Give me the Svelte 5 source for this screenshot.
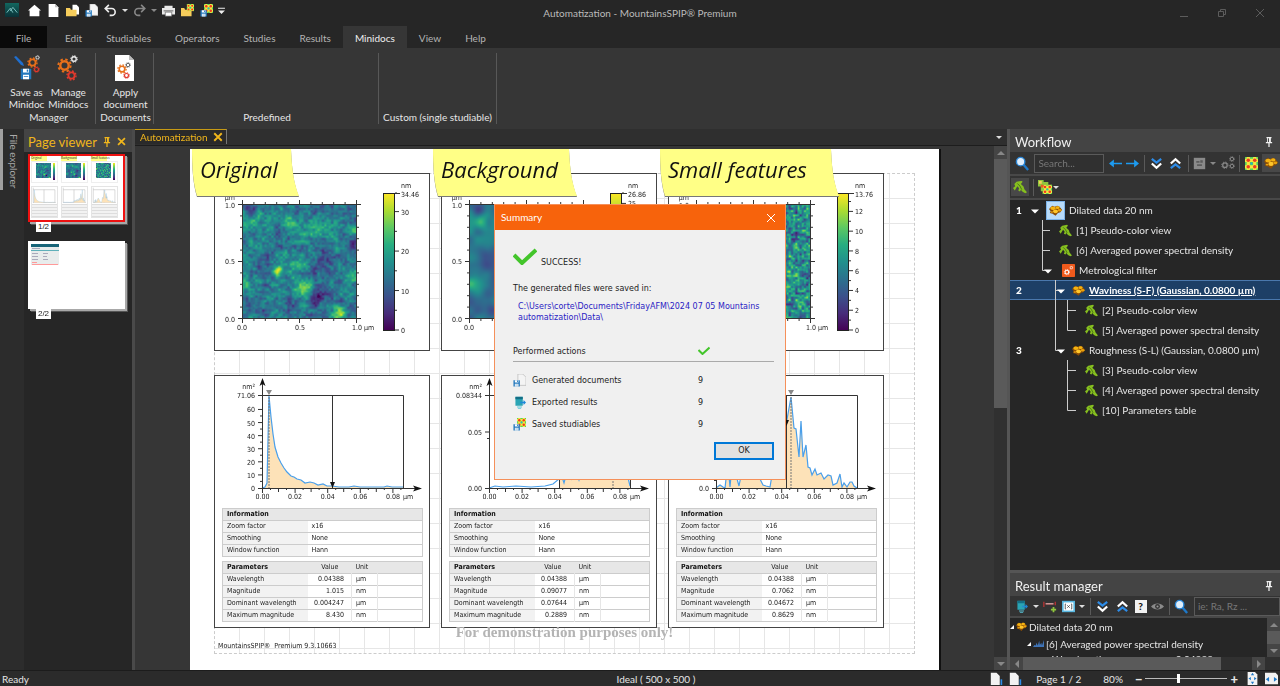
<script>
  /**
   * Surface analysis workspace: ribbon, page viewer, report page,
   * workflow tree and the batch summary dialog.
   */
  const tabs = ['Edit', 'Studiables', 'Operators', 'Studies', 'Results', 'Minidocs', 'View', 'Help']
  let activeTab = $state('Minidocs')
  let summaryOpen = $state(true)
  let zoom = $state(40)

  // Hot spots and pits of the scanned surface: x, y, radius, height (0..1 units)
  const blobs = [
    [0.31, 0.57, 0.04, 0.55], [0.85, 0.95, 0.06, 0.36], [0.82, 0.88, 0.04, 0.15], [0.1, 0.15, 0.06, 0.25],
    [0.4, 0.17, 0.05, 0.25], [0.31, 0.09, 0.07, 0.18], [0.53, 0.72, 0.07, 0.26], [0.98, 0.21, 0.04, 0.35],
    [0.66, 0.27, 0.1, 0.18], [0.45, 0.55, 0.08, 0.14], [0.06, 0.7, 0.1, 0.17], [0.38, 0.42, 0.05, 0.12],
    [0.96, 0.62, 0.05, 0.15], [0.82, 0.3, 0.04, 0.15], [0.72, 0.52, 0.07, -0.2], [0.98, 0.37, 0.06, -0.25],
    [0.64, 0.82, 0.06, -0.2], [0.14, 0.45, 0.08, -0.15], [0.2, 0.93, 0.06, -0.15], [0.08, 0.03, 0.06, -0.15],
    [0.42, 0.88, 0.05, -0.12], [0.28, 0.28, 0.05, -0.12]
  ]

  const columns = [
    {
      title: 'Original', noteWidth: 110, max: 34.46, maxLabel: '34.46', step: 10,
      layers: [[6, 0.1], [13, 0.2], [27, 0.22], [50, 0.22]], relief: 1, base: 0.4,
      yTop: '71.06', yTicks: [10, 20, 30, 40, 50, 60].map((v) => [String(v), 113 - v * 1.309]),
      zero: '0', peak: 55, marker: 118, markerY: 112, fillFrom: 0,
      curve: '48,113 51,112 53,108 55,21 57,42 59,59 61,72 64,82 67,88 70,93 73,97 77,101 80,102 83,104 87,105 91,108 96,107 100,108 104,110 109,109 113,111 118,111 125,112 135,112 140,111 146,112 160,112 170,112 173,111 178,112 189,112',
      values: ['0.04388', '1.015', '0.004247', '8.430'], narrow: false
    },
    {
      title: 'Background', noteWidth: 147, max: 26.86, maxLabel: '26.86', step: 5,
      layers: [[6, 0.15], [13, 0.2]], relief: 1.2, base: 0.38,
      yTop: '0.08344', yTicks: [['0.05', 57]],
      zero: '0.00', peak: 172, marker: 118, markerY: 100, fillFrom: 118,
      curve: '48,113 54,111 62,112 75,111 90,112 104,111 112,109 118,104 120,99 123,108 126,97 130,104 134,92 138,105 143,88 147,100 152,80 157,98 162,50 165,90 168,60 172,21 176,98 179,80 182,104 185,94 189,111',
      values: ['0.04388', '0.09077', '0.07644', '0.2889'], narrow: true
    },
    {
      title: 'Small features', noteWidth: 182, max: 13.76, maxLabel: '13.76', step: 2,
      layers: [[31, 0.4], [53, 0.5]], relief: 0, base: 0.48,
      yTop: '0.5', yTicks: [['0.1', 99]],
      zero: '0.0', peak: 123, marker: 118, markerY: 50, fillFrom: 0,
      curve: '48,113 52,110 55,112 57,113 59,95 61,101 62,112 64,90 68,100 71,111 74,96 80,80 86,90 91,102 95,110 98,111 102,112 104,100 108,75 113,84 118,50 123,22 126,53 128,54 131,82 133,46 135,82 138,70 140,92 142,93 144,100 147,94 149,100 153,98 156,104 160,100 163,101 165,110 169,108 172,99 174,112 176,108 179,112 182,107 184,107 186,111 189,113',
      values: ['0.04388', '0.7062', '0.04672', '0.8629'], narrow: true
    }
  ]

  const info = [['Zoom factor', 'x16'], ['Smoothing', 'None'], ['Window function', 'Hann']]
  const params = [['Wavelength', 'µm'], ['Magnitude', 'nm'], ['Dominant wavelength', 'µm'], ['Maximum magnitude', 'nm']]

  // gutter = width of the guide lines in front of the icon
  const tree = [
    { n: 1, gutter: 18, guide: '', caret: 7, icon: 'gold', text: 'Dilated data 20 nm', boxed: true },
    { gutter: 31, guide: 'M14.5 0V20M14 10.5H22', icon: 'leaf', text: '[1] Pseudo-color view' },
    { gutter: 31, guide: 'M14.5 0V20M14 10.5H22', icon: 'leaf', text: '[6] Averaged power spectral density' },
    { gutter: 34, guide: 'M14.5 0V10.5H20', caret: 20, icon: 'filter', text: 'Metrological filter' },
    { n: 2, gutter: 44, guide: 'M27.5 0V20M27 10.5H33', caret: 33, icon: 'gold', text: 'Waviness (S-F) (Gaussian, 0.0800 µm)', selected: true },
    { gutter: 57, guide: 'M27.5 0V20M39.5 0V20M39 10.5H48', icon: 'leaf', text: '[2] Pseudo-color view' },
    { gutter: 57, guide: 'M27.5 0V20M39.5 0V10.5H48', icon: 'leaf', text: '[5] Averaged power spectral density' },
    { n: 3, gutter: 44, guide: 'M27.5 0V10.5H33', caret: 33, icon: 'gold', text: 'Roughness (S-L) (Gaussian, 0.0800 µm)' },
    { gutter: 57, guide: 'M39.5 0V20M39 10.5H48', icon: 'leaf', text: '[3] Pseudo-color view' },
    { gutter: 57, guide: 'M39.5 0V20M39 10.5H48', icon: 'leaf', text: '[4] Averaged power spectral density' },
    { gutter: 57, guide: 'M39.5 0V10.5H48', icon: 'leaf', text: '[10] Parameters table' }
  ]

  const actions = [['docsave', 'Generated documents', 9], ['export', 'Exported results', 9], ['colorsave', 'Saved studiables', 9]]

  const viridis = [[68, 1, 84], [71, 44, 122], [59, 81, 139], [44, 113, 142], [33, 144, 141], [39, 173, 129], [92, 200, 99], [170, 220, 50], [253, 231, 37]]
  const rgb = (c) => `rgb(${c.join(',')})`

  function hash(x, y) {
    const s = Math.sin(x * 127.1 + y * 311.7) * 43758.5453
    return s - Math.floor(s)
  }

  function noise(x, y) {
    const xi = Math.floor(x)
    const yi = Math.floor(y)
    const fx = x - xi
    const fy = y - yi
    const u = fx * fx * (3 - 2 * fx)
    const v = fy * fy * (3 - 2 * fy)
    const top = hash(xi, yi) * (1 - u) + hash(xi + 1, yi) * u
    const bottom = hash(xi, yi + 1) * (1 - u) + hash(xi + 1, yi + 1) * u
    return top * (1 - v) + bottom * v - 0.5
  }

  function paintSurface(canvas, col) {
    const size = canvas.width
    const ctx = canvas.getContext('2d')
    const image = ctx.createImageData(size, size)
    for (let j = 0; j < size; j++) {
      for (let i = 0; i < size; i++) {
        const x = i / size
        const y = j / size
        let h = col.base
        for (const [freq, amp] of col.layers) h += noise(x * freq + freq, y * freq) * amp
        for (const [bx, by, r, a] of blobs) {
          h += col.relief * a * Math.exp(-((x - bx) ** 2 + (y - by) ** 2) / (r * r))
        }
        const t = Math.max(0, Math.min(0.999, h)) * 8
        const k = Math.floor(t)
        const o = (j * size + i) * 4
        for (let c = 0; c < 3; c++) {
          image.data[o + c] = viridis[k][c] + (viridis[k + 1][c] - viridis[k][c]) * (t - k)
        }
        image.data[o + 3] = 255
      }
    }
    ctx.putImageData(image, 0, 0)
  }

  const range = (n) => Array.from({ length: n }, (_, i) => i)
  const scaleY = (col, v) => 157 - (v / col.max) * 136
  // Main labels skip anything that would collide with the maximum
  const scaleLabels = (col) => range(20).map((i) => i * col.step).filter((v) => v < col.max - 0.5)
  const notePath = (w) => `M2 0H${w - 9}C${w - 8} 22 ${w - 6} 34 ${w - 1} 47H7C3 34 2 18 2 0Z`
</script>

{#snippet icon(name, size = 14)}
  <svg class="icon" width={size} height={size} viewBox="0 0 16 16" aria-hidden="true"><use href="#i-{name}" /></svg>
{/snippet}

{#snippet curve(col)}
  <polygon points="{col.curve} 189,113 48,113" fill="#fde2b8" clip-path="url(#clip-{col.fillFrom})" />
  <polyline points={col.curve} fill="none" stroke="#4a9fea" stroke-width="1.2" />
{/snippet}

<svg class="sheet" width="0" height="0" aria-hidden="true">
  <defs>
    <linearGradient id="viridis" x1="0" y1="1" x2="0" y2="0">
      {#each viridis as c, i}<stop offset={i / 8} stop-color={rgb(c)} />{/each}
    </linearGradient>
    <linearGradient id="logo" x1="0" y1="0" x2="0" y2="1"><stop offset="0" stop-color="#12675f" /><stop offset="1" stop-color="#0a3238" /></linearGradient>
    <clipPath id="clip-0"><rect x="48" y="0" width="150" height="133" /></clipPath>
    <clipPath id="clip-118"><rect x="118" y="0" width="80" height="133" /></clipPath>
  </defs>
  <symbol id="i-logo" viewBox="0 0 16 16"><rect width="16" height="16" fill="url(#logo)" /><path d="M2 11l4-5 3 5M6 9l3-4 5 6" fill="none" stroke="#8cc" stroke-width="1" /></symbol>
  <symbol id="i-home" viewBox="0 0 16 16"><path d="M8 1l8 7h-2v7H2V8H0z" fill="#fff" /></symbol>
  <symbol id="i-doc" viewBox="0 0 16 16"><path d="M2 0h8l4 4v12H2z" fill="#fff" /><path d="M10 0v4h4" fill="#bbb" /></symbol>
  <symbol id="i-folder" viewBox="0 0 16 16"><path d="M8 1h5l3 3v9H8z" fill="#fff" /><path d="M0 5h5l1 2h7v8H0z" fill="#f6cd5b" /></symbol>
  <symbol id="i-disk" viewBox="0 0 16 16"><path d="M1 1h13l1 1v13H1z" fill="#2378bd" /><path d="M4 1h8v5H4zM4 9h8v6H4z" fill="#fff" /><path d="M9 2h2v3H9zM5 11h6v1H5z" fill="#2378bd" /></symbol>
  <symbol id="i-docsave" viewBox="0 0 16 16"><path d="M6 0h6l4 4v10H6z" fill="#f4f4f4" stroke="#aaa" stroke-width=".7" /><use href="#i-disk" x="0" y="7" width="9" height="9" /></symbol>
  <symbol id="i-undo" viewBox="0 0 16 16"><path d="M6 1L1.500 5.500 6 10M2 5.500h7.500a4.200 4.200 0 010 8.500H7" fill="none" stroke="#eee" stroke-width="2" /></symbol>
  <symbol id="i-redo" viewBox="0 0 16 16"><path d="M10 1l4.500 4.500L10 10M14 5.500H6.500a4.200 4.200 0 000 8.500H9" fill="none" stroke="#888" stroke-width="2" /></symbol>
  <symbol id="i-print" viewBox="0 0 16 16"><path d="M3 2h10v3H3zM0 5h16v8H0z" fill="#e8e8e8" /><path d="M2 8h12v1H2z" fill="#444" /><path d="M4 10h8v5H4z" fill="#fff" stroke="#555" stroke-width=".8" /></symbol>
  <symbol id="i-colors" viewBox="0 0 16 16"><rect width="16" height="16" fill="#f7e640" /><path d="M0 0h2v2H0zM6 0h4v2H6zM14 0h2v2h-2zM6 6h4v4H6zM0 6h2v4H0zM14 6h2v4h-2zM0 14h2v2H0zM6 14h4v2H6zM14 14h2v2h-2z" fill="#54d15c" /><circle cx="4" cy="4" r="2.200" fill="#ee3b22" /><circle cx="12" cy="4" r="2.200" fill="#ee3b22" /><circle cx="4" cy="12" r="2.200" fill="#ee3b22" /><circle cx="12" cy="12" r="2.200" fill="#ee3b22" /><circle cx="8" cy="8" r="1.200" fill="#23a4e8" /></symbol>
  <symbol id="i-colorfolder" viewBox="0 0 16 16"><path d="M0 5h4l1 2h8v8H0z" fill="#f6cd5b" /><use href="#i-colors" x="7" y="0" width="9" height="9" /></symbol>
  <symbol id="i-colorsave" viewBox="0 0 16 16"><use href="#i-colors" x="5" y="0" width="11" height="11" /><use href="#i-disk" x="0" y="7" width="9" height="9" /></symbol>
  <symbol id="i-more" viewBox="0 0 16 16"><path d="M3 4h10v1.500H3zM3 8h10l-5 5z" fill="#eee" /></symbol>
  <symbol id="i-gear" viewBox="0 0 16 16"><circle cx="8" cy="8" r="4.500" fill="none" stroke="currentColor" stroke-width="2.600" /><circle cx="8" cy="8" r="6.600" fill="none" stroke="currentColor" stroke-width="2" stroke-dasharray="2.600 2.580" /></symbol>
  <symbol id="i-gears" viewBox="0 0 26 26"><use href="#i-gear" x="2" y="3" width="15" height="15" color="#e8701a" /><use href="#i-gear" x="15" y="0" width="8" height="8" color="#eee" /><use href="#i-gear" x="11" y="15" width="11" height="11" color="#e23a2e" /></symbol>
  <symbol id="i-minidoc" viewBox="0 0 26 26"><path d="M0 2l2-1 7 7 1 3-3-1z" fill="#1f6fd0" /><use href="#i-gear" x="13" y="2" width="11" height="11" color="#e8701a" /><use href="#i-gear" x="21" y="0" width="5" height="5" color="#eee" /><use href="#i-gear" x="19" y="11" width="7" height="7" color="#e23a2e" /><use href="#i-disk" x="6" y="13" width="12" height="12" /></symbol>
  <symbol id="i-applydoc" viewBox="0 0 26 26"><path d="M3 0h14l5 5v21H3z" fill="#fff" /><path d="M17 0v5h5" fill="#bbb" /><use href="#i-gear" x="5" y="9" width="10" height="10" color="#e8701a" /><use href="#i-gear" x="13" y="7" width="6" height="6" color="#666" /><use href="#i-gear" x="11" y="17" width="7" height="7" color="#e23a2e" /></symbol>
  <symbol id="i-pin" viewBox="0 0 16 16"><path d="M4 0h8v2h-1v6h2v2H9v6H7v-6H3V8h2V2H4z" fill="currentColor" /><path d="M6.500 2h1.500v6H6.500z" fill="#444" /></symbol>
  <symbol id="i-close" viewBox="0 0 16 16"><path d="M3 3l10 10M13 3L3 13" fill="none" stroke="currentColor" stroke-width="2.500" /></symbol>
  <symbol id="i-search" viewBox="0 0 16 16"><path d="M9 9l5 6" stroke="#1e78c8" stroke-width="2.500" /><circle cx="6" cy="6" r="4.500" fill="#dfeefb" stroke="#2a86d6" stroke-width="1.500" /></symbol>
  <symbol id="i-left" viewBox="0 0 16 16"><path d="M0 8l6-5v4h10v2H6v4z" fill="#1d9bf0" /></symbol>
  <symbol id="i-right" viewBox="0 0 16 16"><path d="M16 8l-6-5v4H0v2h10v4z" fill="#1d9bf0" /></symbol>
  <symbol id="i-down2" viewBox="0 0 16 16"><path d="M3 3l5 4 5-4" fill="none" stroke="#2d8ce8" stroke-width="2.400" /><path d="M3 8l5 4.500L13 8" fill="none" stroke="#fff" stroke-width="2.400" /></symbol>
  <symbol id="i-up2" viewBox="0 0 16 16"><path d="M3 8l5-4.500L13 8" fill="none" stroke="#fff" stroke-width="2.400" /><path d="M3 13l5-4 5 4" fill="none" stroke="#2d8ce8" stroke-width="2.400" /></symbol>
  <symbol id="i-graybox" viewBox="0 0 16 16"><rect x="1" y="1" width="14" height="14" fill="#8a8a8a" /><path d="M4 5h4v2H4zM9 4h3v3H9zM5 9h6v2H5z" fill="#5c5c5c" /></symbol>
  <symbol id="i-graygears" viewBox="0 0 16 16"><use href="#i-gear" x="0" y="6" width="9" height="9" color="#888" /><use href="#i-gear" x="9" y="0" width="7" height="7" color="#888" /><use href="#i-gear" x="9" y="8" width="7" height="7" color="#888" /></symbol>
  <symbol id="i-gold" viewBox="0 0 16 16"><path d="M0 6l4-4 3 1.500L10 2l3 1.500 3 3.500-2 3-3 1-3 3.500-3.500-2.500L1 11l1-2z" fill="#8a4d06" /><ellipse cx="4.800" cy="5.200" rx="3.200" ry="2.200" fill="#f4b312" /><ellipse cx="10.500" cy="4.500" rx="2.600" ry="1.800" fill="#f4b312" /><ellipse cx="8" cy="9" rx="3" ry="2.300" fill="#ffc62a" /><ellipse cx="13" cy="7.800" rx="2.400" ry="1.500" fill="#e9a10e" /><ellipse cx="3.500" cy="9.800" rx="1.600" ry="1" fill="#e9a10e" /></symbol>
  <symbol id="i-leaf" viewBox="0 0 16 16"><path d="M0 9l2.500-2-1-2.500L4 2l3-.5L10 1l1 1-2 2.500 3 3 1 3 3 3.500-2 1-3-1.500L9 11l-1 2-2-1 1-2.500L5 7l-3 5z" fill="#86bf1f" /><path d="M5 4l3 3 2 4" fill="none" stroke="#446b14" stroke-width="1" /></symbol>
  <symbol id="i-filter" viewBox="0 0 16 16"><rect width="16" height="16" rx="1" fill="#f05a1c" /><use href="#i-gear" x="2" y="6" width="8" height="8" color="#fff" /><use href="#i-gear" x="9" y="2" width="5" height="5" color="#fff" /></symbol>
  <symbol id="i-views" viewBox="0 0 16 16"><path d="M0 0h6v2h5v3h4v10H5v-3H3V7H0z" fill="#8fc63d" /><use href="#i-colors" x="5" y="5" width="10" height="10" /><path d="M1 1h3v3H1z" fill="#f6cd5b" /><path d="M3 5h3v3H3z" fill="#ee5b22" /></symbol>
  <symbol id="i-export" viewBox="0 0 16 16"><path d="M3 1h9v11H3z" fill="#2aa5b5" /><path d="M3 1h9v3H3z" fill="#146f86" /><path d="M9 7h4V5l3 3-3 3V9H9z" fill="#1e88d8" /><path d="M5 13h6v1H5zM6 15h4v1H6z" fill="#59c4d8" /></symbol>
  <symbol id="i-span" viewBox="0 0 16 16"><path d="M1 3v6M14 3v4M3 5.500h9" stroke="#c33" stroke-width="1.300" /><path d="M3 5.500h9" stroke="#ddd" /><path d="M12 9v6M9 12h6" stroke="#8fc63d" stroke-width="2" /></symbol>
  <symbol id="i-formula" viewBox="0 0 16 16"><path d="M0 1h16v14H0z" fill="#59b7e0" /><path d="M2 3h12v10H2z" fill="#fff" /><path d="M5 5H4v6h1M11 5h1v6h-1M6.500 6.500l3 3M9.500 6.500l-3 3" fill="none" stroke="#444" /></symbol>
  <symbol id="i-eye" viewBox="0 0 16 16"><path d="M0 8c4-5 12-5 16 0-4 5-12 5-16 0z" fill="#8a8a8a" /><circle cx="8" cy="8" r="3" fill="#333" /><circle cx="8" cy="8" r="1.300" fill="#999" /></symbol>
  <symbol id="i-spectrum" viewBox="0 0 16 16"><path d="M0 13l2-3 2 1 1-4 2 4 2-7 1 6 2-3 1 4 3-8v10z" fill="#3f74b8" /></symbol>
  <symbol id="i-pageicon" viewBox="0 0 16 16"><path d="M1 1h7l4 4v11H1z" fill="#f2f2f2" /><path d="M14 9v7" stroke="#2d8ce8" stroke-width="2" /></symbol>
  <symbol id="i-fitpage" viewBox="0 0 16 16"><path d="M2 0h9l3 3v13H2z" fill="#f2f2f2" /><path d="M8 1l2 3H6zM8 15l2-3H6zM3 8l3-2v4zM13 8l-3-2v4z" fill="#1e78c8" /></symbol>
  <symbol id="i-fitwidth" viewBox="0 0 16 16"><path d="M0 1h13l3 3v11H0z" fill="#f2f2f2" /><path d="M1 9l4-3v6zM15 9l-4-3v6z" fill="#1e78c8" /></symbol>
</svg>

<div class="app">
  <header class="titlebar">
    <div class="quick">
      <span class="slot">{@render icon('logo')}</span>
      {#each ['home', 'doc', 'folder', 'docsave', 'undo'] as name}
        <button class="tool" aria-label={name}>{@render icon(name, 13)}</button>
      {/each}
      <span class="caret"></span>
      <button class="tool" aria-label="redo">{@render icon('redo', 13)}</button>
      <span class="caret dim"></span>
      {#each ['print', 'colorfolder', 'colorsave'] as name}
        <button class="tool" aria-label={name}>{@render icon(name, 13)}</button>
      {/each}
      <button class="tool small" aria-label="more">{@render icon('more', 11)}</button>
    </div>
    <h1>Automatization - MountainsSPIP® Premium</h1>
    <div class="window-buttons">
      <button aria-label="minimize"><svg width="10" height="10"><path d="M1 8.500h8" /></svg></button>
      <button aria-label="restore"><svg width="10" height="10"><path d="M1.500 3.500h5v5h-5zM3.500 3V1.500h5v5H7" /></svg></button>
      <button aria-label="close"><svg width="10" height="10"><path d="M1 1l8 8M9 1L1 9" /></svg></button>
    </div>
  </header>

  <nav class="tabs">
    <button class="file">File</button>
    {#each tabs as tab}
      <button class="tab" class:active={tab === activeTab} onclick={() => (activeTab = tab)}>{tab}</button>
    {/each}
  </nav>

  <section class="ribbon">
    <div class="group manager">
      <div class="actions">
        <button>{@render icon('minidoc', 26)}<span>Save as<br />Minidoc</span></button>
        <button>{@render icon('gears', 26)}<span>Manage<br />Minidocs</span></button>
      </div>
      <span class="group-name">Manager</span>
    </div>
    <div class="group documents">
      <div class="actions">
        <button>{@render icon('applydoc', 26)}<span>Apply<br />document</span></button>
      </div>
      <span class="group-name">Documents</span>
    </div>
    <div class="group predefined"><span class="group-name">Predefined</span></div>
    <div class="group custom"><span class="group-name">Custom (single studiable)</span></div>
  </section>

  <main>
    <aside class="explorer"><button>File explorer</button></aside>

    <aside class="viewer">
      <div class="viewer-head">
        <h2>Page viewer</h2>
        <button aria-label="pin">{@render icon('pin', 10)}</button>
        <button aria-label="close panel">{@render icon('close', 11)}</button>
      </div>
      <div class="thumbs">
        <figure>
          <div class="thumb current">
            {#each columns as col}
              <div class="mini">
                <span class="mini-note">{col.title}</span>
                <div class="mini-map">
                  <canvas width="15" height="15" use:paintSurface={col}></canvas>
                  <svg width="2" height="17"><rect width="2" height="17" fill="url(#viridis)" /></svg>
                </div>
                <div class="mini-plot">
                  <svg width="24" height="17" viewBox="40 0 156 124" preserveAspectRatio="none">
                    <path d="M48 5V113H195M48 20H189V113M118 20V113" fill="none" stroke="#aaa" stroke-width="3" />
                    {@render curve(col)}
                  </svg>
                  <div class="mini-lines"></div>
                </div>
              </div>
            {/each}
          </div>
          <figcaption>1/2</figcaption>
        </figure>
        <figure>
          <div class="thumb second">
            <svg width="28" height="22">
              <path d="M0 0h28v21H0z" fill="#e8ecec" /><path d="M0 0h28v3H0z" fill="#176478" /><path d="M0 6h28v1H0z" fill="#5fb0ba" />
              <path d="M1 4.500h8M1 9.500h6M1 12.500h6M1 15.500h6M12 9.500h5M12 12.500h4M12 15.500h5" stroke="#aab" /><path d="M1 18.500h5M1 20.500h26" stroke="#f99" />
            </svg>
          </div>
          <figcaption>2/2</figcaption>
        </figure>
      </div>
    </aside>

    <section class="document">
      <div class="doc-tabs">
        <button class="doc-tab">Automatization {@render icon('close', 12)}</button>
        <span class="caret"></span>
      </div>
      <div class="doc-body">
        <div class="canvas">
          <article class="page">
            <div class="margins">
              <div class="columns">
                {#each columns as col}
                  <div class="column">
                    <div class="note">
                      <svg width={col.noteWidth} height="49">
                        <path d={notePath(col.noteWidth)} fill="#777" transform="translate(0 1)" />
                        <path d={notePath(col.noteWidth)} fill="#ffff86" />
                      </svg>
                      <h3>{col.title}</h3>
                    </div>

                    <div class="card">
                      <svg class="plot" width="214" height="176" viewBox="1 1 214 176">
                        <foreignObject x="28" y="31" width="115" height="115">
                          <canvas width="115" height="115" use:paintSurface={col}></canvas>
                        </foreignObject>
                        <rect x="28.500" y="31.500" width="114" height="114" class="line" />
                        {#each range(11) as i}
                          {@const len = i % 5 ? 2 : 4}
                          {@const at = 28.5 + i * 11.4}
                          <path class="line" d="M{at} {31 - len}v{len}M{at} 146v{len}M{28 - len} {at + 3}h{len}M143 {at + 3}h{len}" />
                        {/each}
                        <text x="21" y="27" class="end">µm</text>
                        <text x="21" y="35" class="end">1.0</text>
                        <text x="21" y="91" class="end">0.5</text>
                        <text x="21" y="149" class="end">0.0</text>
                        <text x="28" y="157" class="mid">0.0</text>
                        <text x="86" y="157" class="mid">0.5</text>
                        <text x="138" y="157">1.0 µm</text>
                        <rect x="169.500" y="20.500" width="11" height="137" fill="url(#viridis)" stroke="#222" />
                        <text x="187" y="15">nm</text>
                        <text x="187" y="24">{col.maxLabel}</text>
                        <path class="line" d="M181 20.500h5" />
                        {#each scaleLabels(col) as v}
                          <path class="line" d="M181 {scaleY(col, v)}h4M181 {scaleY(col, v + col.step / 2) > 20 ? scaleY(col, v + col.step / 2) : 20}h2" />
                          <text x="187" y={scaleY(col, v) + 3}>{v}</text>
                        {/each}
                      </svg>
                    </div>

                    <div class="card spectrum">
                      <svg class="plot" width="214" height="132" viewBox="1 1 214 132">
                        {@render curve(col)}
                        <path class="line" d="M48.500 6V113.500H205M48 20.500H189.500V113M{col.marker + 0.5} 20V113" />
                        <path d="M48.500 3l3 8-3-2-3 2zM208 113.500l-9-3 2 3-2 3z" fill="#111" />
                        <path d="M{col.peak} 22V113" stroke="#777" stroke-dasharray="2 1" />
                        <path d="M{col.peak - 3} 15h6l-3 5z" fill="#888" />
                        <path d="M{col.marker - 2} {col.markerY - 5}h5l-2.500 6z" fill="#111" />
                        <text x="41" y="14" class="end">nm²</text>
                        <text x="41" y="23" class="end">{col.yTop}</text>
                        <text x="41" y="116" class="end">{col.zero}</text>
                        <path class="line" d="M44 113.500h4M44 20.500h4" />
                        {#each col.yTicks as [label, y]}
                          <path class="line" d="M44 {y}h4M46 {y + 6.5}h2" />
                          <text x="41" y={y + 3} class="end">{label}</text>
                        {/each}
                        {#each range(5) as i}
                          {@const x = 48.5 + i * 32.6}
                          <path class="line" d="M{x} 113v5M{x + 8} 113v2" />
                          {#if i < 4}<path class="line" d="M{x + 16} 113v4M{x + 24} 113v2" />{/if}
                          <text {x} y="124" class="mid">0.0{i * 2 || '0'}</text>
                        {/each}
                        <text x="189" y="124">µm</text>
                      </svg>
                      <table>
                        <colgroup><col class="c-name" /><col /></colgroup>
                        <thead><tr><th colspan="2">Information</th></tr></thead>
                        <tbody>
                          {#each info as [name, value]}
                            <tr><th>{name}</th><td>{value}</td></tr>
                          {/each}
                        </tbody>
                      </table>
                      <table class:narrow={col.narrow}>
                        <colgroup><col class="c-name" /><col class="c-value" /><col class="c-unit" /><col /></colgroup>
                        <thead><tr><th>Parameters</th><td class="value">Value</td><td class="unit">Unit</td><td></td></tr></thead>
                        <tbody>
                          {#each params as [name, unit], i}
                            <tr><th>{name}</th><td class="value">{col.values[i]}</td><td class="unit">{unit}</td><td></td></tr>
                          {/each}
                        </tbody>
                      </table>
                    </div>
                  </div>
                {/each}
              </div>
              <p class="watermark">For demonstration purposes only!</p>
              <p class="version">MountainsSPIP®&nbsp; Premium 9.3.10663</p>
            </div>
          </article>
        </div>
        <div class="vscroll">
          <span class="arrow up"></span>
          <span class="thumb-bar"></span>
          <span class="rest"></span>
          <span class="arrow down"></span>
        </div>
      </div>
    </section>

    <aside class="side">
      <section class="workflow">
        <div class="side-head"><h2>Workflow</h2>{@render icon('pin', 10)}</div>
        <div class="toolbar">
          {@render icon('search', 15)}
          <input type="text" aria-label="Search" placeholder="Search..." />
          <button class="tool" aria-label="previous">{@render icon('left', 13)}</button>
          <button class="tool" aria-label="next">{@render icon('right', 13)}</button>
          <span class="bar"></span>
          <button class="tool" aria-label="expand">{@render icon('down2', 15)}</button>
          <button class="tool" aria-label="collapse">{@render icon('up2', 15)}</button>
          <span class="bar"></span>
          <button class="tool" aria-label="preview">{@render icon('graybox', 13)}</button>
          <span class="caret dim"></span>
          <button class="tool" aria-label="settings">{@render icon('graygears', 14)}</button>
          <span class="bar"></span>
          <button class="tool" aria-label="studiables">{@render icon('colors', 13)}</button>
          <button class="tool on" aria-label="surface">{@render icon('gold', 14)}</button>
        </div>
        <div class="toolbar short">
          <button class="tool on" aria-label="studies">{@render icon('leaf', 14)}</button>
          <span class="bar"></span>
          <button class="tool wide" aria-label="views">{@render icon('views', 15)}<span class="caret"></span></button>
        </div>
        <ul class="tree">
          {#each tree as row}
            <li class:selected={row.selected}>
              <b>{row.n ?? ''}</b>
              <svg class="guide" width={row.gutter} height="20">
                <path d={row.guide} fill="none" stroke="#ccc" />
                {#if row.caret}<path d="M{row.caret - 4} 9.500h8l-4 4z" fill="#fff" />{/if}
              </svg>
              <span class="node" class:boxed={row.boxed}>{@render icon(row.icon, 13)}</span>
              <span class="name">{row.text}</span>
            </li>
          {/each}
        </ul>
      </section>

      <section class="results">
        <div class="side-head"><h2>Result manager</h2>{@render icon('pin', 10)}</div>
        <div class="toolbar">
          <button class="tool" aria-label="export">{@render icon('export', 13)}</button>
          <span class="caret"></span>
          <button class="tool" aria-label="distance">{@render icon('span', 14)}</button>
          <button class="tool" aria-label="formula">{@render icon('formula', 13)}</button>
          <span class="caret"></span>
          <span class="bar"></span>
          <button class="tool" aria-label="expand">{@render icon('down2', 15)}</button>
          <button class="tool" aria-label="collapse">{@render icon('up2', 15)}</button>
          <button class="tool help">?</button>
          <button class="tool" aria-label="show">{@render icon('eye', 13)}</button>
          <span class="bar"></span>
          {@render icon('search', 15)}
          <input type="text" aria-label="Filter results" placeholder="ie: Ra, Rz ..." />
        </div>
        <div class="result-body">
          <ul class="result-list">
            <li><span class="corner"></span>{@render icon('gold', 11)} Dilated data 20 nm</li>
            <li class="child"><span class="corner"></span>{@render icon('spectrum', 11)} [6] Averaged power spectral density</li>
            <li class="leafrow"><span>Wavelength</span><span>0.04388</span></li>
          </ul>
          <div class="vscroll">
            <span class="arrow up"></span>
            <span class="thumb-bar"></span>
            <span class="arrow down"></span>
          </div>
        </div>
        <div class="hscroll"><span class="arrow left"></span><span class="thumb-bar"></span><span class="arrow right"></span></div>
      </section>
    </aside>
  </main>

  <footer class="status">
    <span>Ready</span>
    <span class="ideal">Ideal ( 500 x 500 )</span>
    <div class="status-tools">
      {@render icon('pageicon', 13)}
      {@render icon('pageicon', 13)}
      <span class="pages">Page 1 / 2</span>
      <span class="percent">80%</span>
      <div class="zoom">
        <button class="sign">−</button>
        <input type="range" aria-label="Zoom" min="0" max="100" bind:value={zoom} />
        <button class="sign">+</button>
      </div>
      {@render icon('fitpage', 13)}
      {@render icon('fitwidth', 13)}
    </div>
  </footer>

  {#if summaryOpen}
    <div class="summary" role="dialog" aria-labelledby="summary-title">
      <div class="summary-head">
        <h2 id="summary-title">Summary</h2>
        <button aria-label="close summary" onclick={() => (summaryOpen = false)}>
          <svg width="10" height="10"><path d="M1 1l8 8M9 1L1 9" stroke="#fff" /></svg>
        </button>
      </div>
      <div class="summary-body">
        <div class="success">
          <svg width="24" height="18" viewBox="0 0 24 18"><path d="M1 8l8 8L23 3" fill="none" stroke="#43c52b" stroke-width="4" /></svg>
          <span>SUCCESS!</span>
        </div>
        <p>The generated files were saved in:</p>
        <a href="#data">C:\Users\corte\Documents\FridayAFM\2024 07 05 Mountains automatization\Data\</a>
        <table>
          <thead>
            <tr>
              <th>Performed actions</th>
              <td><svg width="12" height="9" viewBox="0 0 24 18"><path d="M1 8l8 8L23 3" fill="none" stroke="#43c52b" stroke-width="4" /></svg></td>
            </tr>
          </thead>
          <tbody>
            {#each actions as [name, label, count]}
              <tr>
                <th><span>{@render icon(name, 13)}{label}</span></th>
                <td>{count}</td>
              </tr>
            {/each}
          </tbody>
        </table>
        <button class="ok" onclick={() => (summaryOpen = false)}>OK</button>
      </div>
    </div>
  {/if}
</div>

<style>
  :global(body) {
    margin: 0;
    background: #262626;
  }

  .app {
    display: flex;
    flex-direction: column;
    height: 100vh;
    overflow: hidden;
    position: relative;
    background: #262626;
    color: #e6e6e6;
    font: 10px/14px Lato, 'Open Sans', sans-serif;
  }

  .sheet { position: absolute; }
  .icon { display: block; flex: none; }

  h1, h2, h3, p, ul, figure { margin: 0; padding: 0; font-weight: 400; }
  ul { list-style: none; }

  button {
    border: 0;
    padding: 0;
    background: none;
    color: inherit;
    font: inherit;
  }

  .caret {
    flex: none;
    border: 3px solid transparent;
    border-top-color: #ddd;
    border-bottom-width: 0;
  }
  .caret.dim { border-top-color: #888; }

  /* Title bar and ribbon */
  .titlebar {
    display: grid;
    grid-template-columns: 1fr auto 1fr;
    align-items: center;
    height: 26px;
    flex: none;
  }
  .titlebar h1 { font-size: 10px; color: #bbb; line-height: 26px; }
  .quick { display: flex; align-items: center; gap: 6px; padding: 0 5px 6px; }
  .slot { margin-right: 3px; }
  .quick .caret { margin: 0 -1px; }
  .quick .small { margin-left: -3px; }
  .window-buttons { display: flex; justify-content: flex-end; gap: 28px; padding-right: 15px; }
  .window-buttons svg { display: block; fill: none; stroke: #5c5c5c; }

  .tabs { display: flex; height: 22px; flex: none; color: #b4b4b4; }
  .tabs button { padding-top: 2px; }
  .file { width: 47px; margin-right: 6px; background: #0a0a0a; }
  .tab { padding: 0 12px; }
  .tab.active { background: #363636; color: #eee; }

  .ribbon { display: flex; height: 81px; flex: none; background: #363636; }
  .group {
    display: flex;
    flex-direction: column;
    justify-content: space-between;
    box-sizing: border-box;
    margin: 5px 0;
    padding-left: 2px;
    border-right: 1px solid #585858;
    text-align: center;
  }
  .actions { display: flex; justify-content: center; gap: 4px; line-height: 12px; }
  .actions button { display: flex; flex-direction: column; align-items: center; gap: 5px; margin-top: 2px; }
  .group-name { margin-top: auto; line-height: 14px; }
  .manager { width: 96px; }
  .documents { width: 58px; }
  .predefined { width: 225px; }
  .custom { width: 118px; padding-left: 0; white-space: nowrap; }

  main { display: flex; flex: 1; min-height: 0; }

  .explorer { width: 24px; flex: none; background: #2c2c2c; }
  .explorer button {
    writing-mode: vertical-rl;
    width: 24px;
    height: 61px;
    padding-top: 4px;
    border-left: 3px solid #a0a0a0;
    color: #aaa;
  }

  /* Page viewer */
  .viewer { width: 108px; flex: none; border-right: 3px solid #4a4a4a; background: #262626; }
  .viewer-head {
    display: flex;
    align-items: center;
    gap: 4px;
    height: 23px;
    padding: 2px 5px 0 4px;
    box-sizing: border-box;
    background: #444;
    color: #f0b61c;
  }
  .viewer-head h2 { flex: 1; font-size: 13px; white-space: nowrap; }
  .thumbs { padding: 2px 4px; }
  figure { margin-bottom: 9px; }
  .thumb {
    display: flex;
    gap: 3px;
    box-sizing: border-box;
    width: 97px;
    height: 68px;
    padding: 0 1px;
    background: #fff;
    box-shadow: 2px 2px 0 #a8a8a8, 3px 3px 0 #555;
  }
  .thumb.current { border: 2px solid #e11; }
  .thumb.second { padding: 3px; }
  figcaption {
    width: 15px;
    margin-left: 8px;
    background: #fff;
    color: #222;
    font: 8px/10px 'Liberation Sans', sans-serif;
    text-align: center;
  }
  .mini { width: 27px; display: flex; flex-direction: column; }
  .mini-note { width: 16px; background: #ffff86; color: #333; font-size: 3px; line-height: 5px; white-space: nowrap; }
  .mini-map { display: flex; gap: 2px; padding: 1px 1px 2px 4px; border: 1px solid #eee; margin-bottom: 3px; }
  .mini-map canvas { width: 15px; height: 15px; }
  .mini-plot { border: 1px solid #e4e4e4; }
  .mini-plot svg { display: block; }
  .mini-lines { height: 13px; background: repeating-linear-gradient(#ddd 0 1px, #f2f2f2 1px 3px); }

  /* Document area */
  .document { display: flex; flex-direction: column; flex: 1; min-width: 0; background: #363636; }
  .doc-tabs {
    display: flex;
    justify-content: space-between;
    align-items: center;
    height: 16px;
    flex: none;
    padding-right: 5px;
    border-bottom: 1px solid #1d1d1d;
    background: #2f2f2f;
  }
  .doc-tab {
    display: flex;
    align-items: center;
    align-self: flex-start;
    gap: 4px;
    height: 15px;
    padding: 0 2px 0 5px;
    border-top: 1px solid #c79a14;
    border-right: 1px solid #777;
    background: #2a2a2a;
    color: #f0b61c;
  }
  .doc-body { display: flex; flex: 1; min-height: 0; }
  .canvas { flex: 1; min-width: 0; overflow: hidden; padding-top: 3px; }
  .page {
    box-sizing: border-box;
    width: 749px;
    margin: 0 auto;
    padding: 24px;
    background: #fff;
    box-shadow: 2px 0 0 #111;
    color: #222;
  }
  .margins {
    box-sizing: border-box;
    border: 1px dashed #ccc;
    padding: 0 0 3px;
    background:
      repeating-linear-gradient(90deg, transparent 0 24px, #e6e6e6 24px 25px),
      repeating-linear-gradient(transparent 0 24px, #e6e6e6 24px 25px);
  }
  .columns { display: grid; grid-template-columns: repeat(3, 216px); gap: 11px; margin: -1px 0 0 -1px; }
  .column { position: relative; display: grid; gap: 24px; }
  .note { position: absolute; top: -24px; left: -24px; z-index: 1; }
  .column:not(:first-child) .note { left: -10px; }
  .note svg { display: block; }
  .note h3 {
    position: absolute;
    top: 6px;
    left: 10px;
    color: #111;
    font: italic 22px/28px 'Open Sans', sans-serif;
    white-space: nowrap;
  }
  .card { border: 1px solid #444; background: #fff; }
  .spectrum { padding-bottom: 5px; }
  .plot { display: block; font: 7px 'DejaVu Sans Condensed', 'DejaVu Sans', sans-serif; fill: #222; }
  .plot canvas { display: block; }
  .line { fill: none; stroke: #333; }
  .end { text-anchor: end; }
  .mid { text-anchor: middle; }

  .card table {
    width: 201px;
    margin: 0 0 4px 7px;
    border-collapse: collapse;
    table-layout: fixed;
    font: 7px/11px 'DejaVu Sans Condensed', 'DejaVu Sans', sans-serif;
  }
  .card table:last-child { margin-bottom: 0; }
  .card tr { border: 1px solid #ccc; }
  .card th, .card td { height: 11px; padding: 0 0 0 4px; text-align: left; font-weight: 400; white-space: nowrap; }
  .card thead { background: #e7e7e7; }
  .card thead th { font-weight: 700; color: #111; }
  .card tbody th { background: #f2f2f2; }
  .c-name { width: 85px; }
  .c-value { width: 44px; }
  .c-unit { width: 26px; }
  .narrow .c-value { width: 40px; }
  .card .value { padding: 0 7px 0 0; text-align: right; }
  .card thead .value { padding-right: 13px; }
  .card tbody .unit { border: solid #e6e6e6; border-width: 0 1px; }

  .watermark {
    position: relative;
    color: #b4b4b4;
    font: bold 15px/8px 'Liberation Serif', serif;
    text-align: center;
  }
  .version { margin: 6px 0 0 3px; font: 7px/8px 'DejaVu Sans Condensed', 'DejaVu Sans', sans-serif; }

  /* Scroll bars */
  .vscroll { display: flex; flex-direction: column; width: 13px; flex: none; background: #303030; }
  .arrow { display: grid; place-items: center; width: 13px; height: 13px; flex: none; background: #454545; }
  .arrow::before { content: ''; border: 4px solid transparent; }
  .up::before { border-bottom-color: #888; border-top-width: 0; }
  .down::before { border-top-color: #888; border-bottom-width: 0; }
  .left::before { border-right-color: #888; border-left-width: 0; }
  .right::before { border-left-color: #888; border-right-width: 0; }
  .thumb-bar { flex: 1; background: #5a5a5a; }
  .rest { flex: 1; }

  /* Right hand panels */
  .side { display: flex; flex-direction: column; width: 270px; flex: none; border-left: 3px solid #555; background: #262626; }
  .workflow { flex: 1; min-height: 0; }
  .side-head {
    display: flex;
    align-items: center;
    justify-content: space-between;
    height: 23px;
    padding: 3px 6px 0 5px;
    box-sizing: border-box;
    background: #444;
    color: #f0f0f0;
  }
  .side-head h2 { font-size: 13px; }
  .toolbar {
    display: flex;
    align-items: center;
    justify-content: space-between;
    box-sizing: border-box;
    height: 24px;
    padding: 0 0 0 5px;
    border-bottom: 2px solid #484848;
    background: #333;
  }
  .toolbar.short { justify-content: flex-start; gap: 4px; padding-left: 1px; }
  .toolbar input {
    box-sizing: border-box;
    width: 70px;
    height: 19px;
    border: 1px solid #5a5a5a;
    padding: 0 3px;
    background: #303030;
    color: #ddd;
    font: inherit;
  }
  .toolbar input::placeholder { color: #777; }
  .results .toolbar { height: 22px; }
  .results .toolbar input { width: 86px; }
  .bar { width: 1px; height: 17px; background: #5a5a5a; }
  .tool.on { padding: 2px; background: #484848; }
  .wide { display: flex; align-items: center; }
  .help { width: 12px; height: 13px; background: #f2f2f2; color: #111; font-weight: 900; line-height: 13px; }

  .tree li { display: flex; align-items: center; height: 20px; white-space: nowrap; }
  .tree li.selected {
    box-sizing: border-box;
    background: #1d3f66;
    box-shadow: inset 0 1px #4a78ad, inset 0 -1px #4a78ad;
    font-weight: 700;
  }
  .tree b { width: 18px; text-align: center; color: #fff; font-weight: 900; }
  .selected .name { text-decoration: underline; color: #fff; }
  .node { margin-right: 4px; }
  .node.boxed { padding: 2px; border: 1px solid #7db4ea; background: #b9dcfb; }

  .results { border-top: 3px solid #555; }
  .result-body { display: flex; height: 39px; overflow: hidden; }
  .result-list { flex: 1; min-width: 0; overflow: hidden; }
  .result-list li { display: flex; align-items: center; gap: 2px; height: 17px; white-space: nowrap; }
  .result-list .child { padding-left: 17px; }
  .result-list .leafrow { justify-content: space-between; align-items: flex-start; padding: 0 54px 0 42px; }
  .corner { border: 3px solid transparent; border-right-color: #fff; border-bottom-color: #fff; border-width: 2px; }
  .hscroll { display: flex; background: #303030; }
  .hscroll .thumb-bar { flex: none; width: 198px; }
  .hscroll .right { margin-left: auto; margin-right: 15px; }

  .status {
    display: grid;
    grid-template-columns: 1fr auto 1fr;
    align-items: center;
    height: 15px;
    flex: none;
    padding: 0 2px;
    border-top: 1px solid #1c1c1c;
    background: #2b2b2b;
  }
  .ideal { padding-left: 32px; }
  .status-tools { display: flex; align-items: center; justify-content: flex-end; gap: 6px; }
  .pages { margin: 0 16px 0 8px; }
  .percent { margin-right: 6px; }
  .zoom { display: flex; align-items: center; gap: 3px; margin-right: 2px; }
  .sign { font-weight: 900; font-size: 13px; line-height: 12px; }
  .status input {
    appearance: none;
    width: 82px;
    height: 10px;
    margin: 0;
    background: linear-gradient(#bbb, #bbb) center / 100% 1px no-repeat;
  }
  .status input::-webkit-slider-thumb { appearance: none; width: 3px; height: 9px; background: #fff; }

  /* Batch summary */
  .summary {
    position: absolute;
    top: 204px;
    left: calc(50% - 146px);
    z-index: 5;
    box-sizing: border-box;
    width: 292px;
    border: 1px solid #f5905a;
    background: #f0f0f0;
    color: #222;
    font: 8px/11px 'DejaVu Sans', sans-serif;
  }
  .summary-head {
    display: flex;
    align-items: center;
    justify-content: space-between;
    height: 25px;
    padding: 0 9px 0 6px;
    background: #f7630c;
    color: #fff;
  }
  .summary-head h2 { font: 10px/25px Lato, sans-serif; }
  .summary-head svg { display: block; }
  .summary-body { display: flex; flex-direction: column; padding: 16px 11px 19px 18px; }
  .success { display: flex; align-items: flex-end; gap: 4px; height: 22px; }
  .success svg { margin-bottom: 3px; }
  .success span { line-height: 10px; }
  .summary-body p { margin-top: 15px; }
  .summary-body a { margin: 7px 6px 0 5px; color: #2a22c4; text-decoration: none; }
  .summary table { margin-top: 20px; border-collapse: collapse; }
  .summary th { padding: 0; font-weight: 400; text-align: left; }
  .summary td { width: 76px; padding: 0; }
  .summary thead tr { height: 18px; border-bottom: 1px solid #aaa; }
  .summary tbody tr { height: 22px; }
  .summary tbody tr:first-child > * { padding-top: 8px; }
  .summary th span { display: flex; align-items: center; gap: 6px; height: 22px; }
  .ok {
    align-self: flex-end;
    width: 60px;
    height: 18px;
    margin-top: 6px;
    border: 2px solid #0078d7;
    background: #e1e1e1;
  }
</style>
